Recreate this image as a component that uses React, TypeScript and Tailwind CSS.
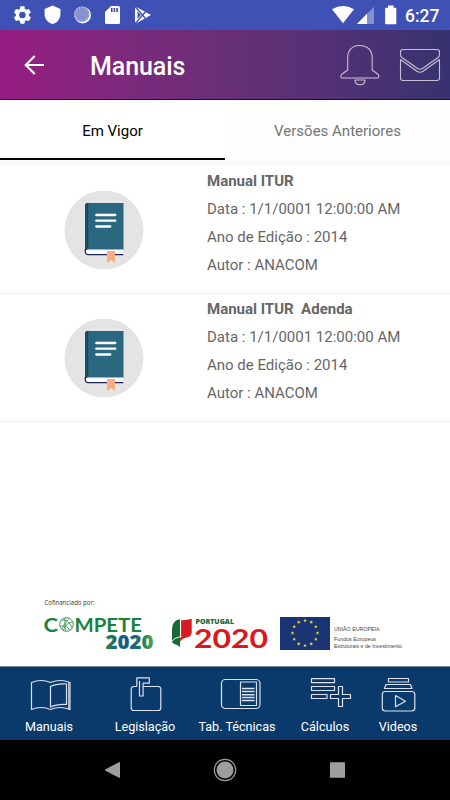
import type { ReactNode } from "react";

const manuals = [
  { title: "Manual ITUR", date: "1/1/0001 12:00:00 AM", year: "2014", author: "ANACOM" },
  { title: "Manual ITUR  Adenda", date: "1/1/0001 12:00:00 AM", year: "2014", author: "ANACOM" },
];

const StatusBar = () => (
  <div className="flex h-[30px] items-center justify-between bg-[#3f51b5] text-white">
    <svg width="160" height="30" viewBox="0 0 160 30" fill="#fff">
      <g transform="translate(11.6 4.2) scale(.9)">
        <path d="M19.14 12.94c.04-.3.06-.61.06-.94s-.02-.64-.07-.94l2.03-1.58a.49.49 0 0 0 .12-.61l-1.92-3.32a.49.49 0 0 0-.59-.22l-2.39.96a7 7 0 0 0-1.62-.94l-.36-2.54A.48.48 0 0 0 13.92 2.4h-3.84a.48.48 0 0 0-.47.41l-.36 2.54c-.59.24-1.13.57-1.62.94l-2.39-.96a.48.48 0 0 0-.59.22L2.74 8.87a.48.48 0 0 0 .12.61l2.03 1.58a6 6 0 0 0 0 1.88l-2.03 1.58a.49.49 0 0 0-.12.61l1.92 3.32c.12.22.37.29.59.22l2.39-.96c.5.38 1.03.7 1.62.94l.36 2.54c.05.24.24.41.48.41h3.84c.24 0 .44-.17.47-.41l.36-2.54a7 7 0 0 0 1.62-.94l2.39.96c.22.08.47 0 .59-.22l1.92-3.32a.48.48 0 0 0-.12-.61zM12 15.6a3.6 3.6 0 1 1 0-7.2 3.6 3.6 0 0 1 0 7.2" />
      </g>
      <path d="M52.5 5.600 60.400 9v5.200c0 4.700-3.400 8.600-7.900 9.900-4.500-1.300-7.900-5.200-7.900-9.900V9z" />
      <circle cx="82.700" cy="15.200" r="8.300" />
      <circle cx="81.800" cy="14.200" r="7.800" fill="#8792d1" />
      <circle cx="81.800" cy="14.200" r="7" fill="none" stroke="#c0c6e8" strokeWidth="1.500" strokeDasharray="1 1.700" />
      <path d="M111 6h7.500q1.500 0 1.500 1.500v15q0 1.500-1.500 1.500h-12q-1.500 0-1.500-1.500V12z" />
      <path d="M111.700 8v4M114.400 8v4M117.100 8v4" stroke="#3f51b5" strokeWidth="1.700" />
      <path d="M135 6.200 151 15 135 24z" />
      <path d="m135 6.500 10.500 12M135 23.700l10.500-12" stroke="#3f51b5" strokeWidth="1.300" />
      <path d="m137.500 11.500 3.400 3.600-3.400 3.600z" fill="#3f51b5" />
    </svg>
    <div className="flex items-center">
      <svg width="70" height="30" viewBox="330 0 70 30" fill="#fff">
        <path d="M332 9.300Q343 2.500 354 9.300L343 23.300z" />
        <path d="M374 6.800V24h-17z" fill="#8791d1" />
        <path d="M367 13.800V24h-10z" />
        <path d="M388 5.500h5.500v2.200h1.800q1 0 1 1v14.500q0 1-1 1h-9.200q-1 0-1-1V8.700q0-1 1-1h1.900z" />
      </svg>
      <span className="w-[50px] pl-[5px] pt-px text-[17.500px] font-medium leading-[30px]">6:27</span>
    </div>
  </div>
);

const Header = () => (
  <header className="flex h-[70px] items-center border-b border-[#1f0a4d] bg-linear-to-r from-[#961b81] to-[#37326f] text-white">
    <svg className="ml-6" width="21" height="20" viewBox="0 0 21 20" fill="none" stroke="#fff" strokeWidth="2.100">
      <path d="M20 10H1.800M10.700 1 1.700 10l9 9" />
    </svg>
    <h1 className="ml-[45px] mt-[3px] text-[25px] font-medium leading-none tracking-[-.1px]">Manuais</h1>
    <svg className="ml-auto mr-[9px] mt-[3px]" width="101" height="44" viewBox="340 44 101 44" fill="none" stroke="#c9bfd4" strokeWidth="1.100" strokeLinejoin="round">
      <path d="M347.700 57.500c0-7.500 5-12 11.700-12 7.600 0 12.800 4.500 12.800 12V70l6 4.500c1 1.500.6 3.500-.7 3.500h-35c-2 0-2-2-1-3.500l6.200-4.500z" />
      <path d="M355 80h10c0 3.200-2 4.700-5 4.700s-5-1.500-5-4.700z" />
      <path d="M403 49.500h34q2.500 0 2.500 2.500v2.500c0 1.500-.5 2.300-1.700 3.200l-15 10.600q-2.800 2-5.600 0L402.200 57.700c-1.200-.9-1.700-1.700-1.700-3.200V52q0-2.500 2.500-2.500z" />
      <path d="M400.500 59.500V78q0 2.500 2.500 2.500h34q2.500 0 2.500-2.500V59.500l-16.400 11.800q-3.100 2-6.200 0z" />
    </svg>
  </header>
);

const Tabs = () => (
  <div className="flex h-[66px] bg-[#fafafa] text-[15px]">
    <button className="h-[60px] w-1/2 border-b-2 border-black bg-white pt-1 text-black">Em Vigor</button>
    <button className="h-[60px] w-1/2 bg-[#fefefe] pt-0.5 text-[#757575]">Versões Anteriores</button>
  </div>
);

const BookIcon = () => (
  <svg width="80" height="80" viewBox="0 0 80 80">
    <circle cx="40" cy="40" r="39.500" fill="#e4e4e4" />
    <path d="M23.500 13H59.500v47H23.500q-2.500 0-2.500-3V15.500q0-2.500 2.500-2.500z" fill="#2b687f" />
    <path d="M23.500 13h.8v49h-1.300q-2-1-2-4V15.500q0-2.500 2.500-2.500z" fill="#194a60" />
    <path d="M24 59.500h35v4.500H24q-2.200 0-2.200-2.300t2.200-2.200z" fill="#fff" />
    <path d="M21.300 59v2.500q0 3.200 3 3.200h35" fill="none" stroke="#20215b" strokeWidth="1.200" />
    <path d="M32.300 25h19M32.300 30.700h19M32.300 36.500h14" stroke="#fff" strokeWidth="2.300" strokeLinecap="round" />
    <path d="M43 61h8v12l-4-3.300-4 3.300z" fill="#f8ac80" />
  </svg>
);

const ManualRow = ({ title, date, year, author }: (typeof manuals)[number]) => (
  <li className="flex h-32 items-start border-b border-[#ececec] pt-px">
    <div className="w-[207px] pl-[63.500px] pt-[23px]">
      <BookIcon />
    </div>
    <div className="whitespace-pre text-[15px] leading-7 text-[#666]">
      <p className="font-bold">{title}</p>
      <p>Data : {date}</p>
      <p>Ano de Edição : {year}</p>
      <p>Autor : {author}</p>
    </div>
  </li>
);

const stars = Array.from({ length: 12 }, (_, i) => {
  const angle = (i * Math.PI) / 6;
  return { x: 305 + 12.5 * Math.sin(angle), y: 633 - 12.5 * Math.cos(angle) };
});

const Sponsors = () => (
  <svg width="450" height="70" viewBox="0 596 450 70">
    <defs>
      <linearGradient id="compete">
        <stop offset="0" stopColor="#23834a" />
        <stop offset=".25" stopColor="#176878" />
        <stop offset=".5" stopColor="#155887" />
        <stop offset=".75" stopColor="#207c65" />
        <stop offset="1" stopColor="#5ba33e" />
      </linearGradient>
    </defs>
    <text x="44.500" y="604.500" fontSize="6.600" fill="#333" fontFamily="Open Sans, sans-serif" textLength="50" lengthAdjust="spacingAndGlyphs">Cofinanciado por:</text>
    <g fontFamily="Lato, sans-serif" fontWeight="700" fontSize="19.500" fill="#18833e">
      <text x="43.500" y="631.500" textLength="14.500" lengthAdjust="spacingAndGlyphs">C</text>
      <text x="74.500" y="631.500" textLength="67.500" lengthAdjust="spacingAndGlyphs">MPETE</text>
    </g>
    <g fill="none" stroke="#3b9652">
      <circle cx="66.500" cy="624.500" r="6.800" strokeWidth="1" />
      <path d="M61 620q8-1 11 8M60.500 626q7-1 9 4M65 618q1 6-3 11M69 618.500q-6 5-3 12.300M72.500 622q-6 0-9 8" strokeWidth=".9" />
    </g>
    <text x="105.500" y="649" fontFamily="Open Sans, sans-serif" fontWeight="800" fontSize="19.200" fill="url(#compete)" textLength="48" lengthAdjust="spacingAndGlyphs">2020</text>

    <path d="M180 619.200v28q-2-2.700-5-3-3-.5-3-4V629q0-8.500 8-9.800z" fill="#17693a" />
    <path d="M181 620.200q5.500.3 10.700-1.400V632q0 4.500-5 5.500-5.700 1-6.700 4.500 0-7 1-9z" fill="#d71920" />
    <path d="M180.600 618v19" stroke="#fff" strokeWidth=".9" />
    <path d="M172.500 641q1-3 9-4.500" stroke="#fff" strokeWidth="1" fill="none" />
    <text x="195.500" y="624" fontFamily="Open Sans, sans-serif" fontWeight="800" fontSize="7.400" fill="#17693a" textLength="38.500" lengthAdjust="spacingAndGlyphs">PORTUGAL</text>
    <text x="194" y="648" fontFamily="Lato, sans-serif" fontWeight="700" fontSize="27" fill="#d71920" textLength="74" lengthAdjust="spacingAndGlyphs">2020</text>

    <rect x="280" y="617" width="50" height="33" fill="#1b3474" />
    {stars.map(({ x, y }) => (
      <path
        key={`${x}-${y}`}
        transform={`translate(${x} ${y})`}
        d="M0-2 .5-.6 1.900-.6.8.3 1.200 1.600 0 .8-1.200 1.600-.8.3-1.900-.6-.5-.6z"
        fill="#f6e52c"
      />
    ))}
    <g fontFamily="Liberation Sans, sans-serif" fontSize="5.800" fill="#444">
      <text x="334" y="631" textLength="45.500" lengthAdjust="spacingAndGlyphs">UNIÃO EUROPEIA</text>
      <text x="334" y="641.200" textLength="42" lengthAdjust="spacingAndGlyphs">Fundos Europeus</text>
      <text x="334" y="647.800" textLength="68" lengthAdjust="spacingAndGlyphs">Estruturais e de Investimento</text>
    </g>
  </svg>
);

type NavItemProps = { label: string; className: string; viewBox: string; children: ReactNode };

const NavItem = ({ label, className, viewBox, children }: NavItemProps) => (
  <button className={`flex flex-col items-center pt-[9px] ${className}`}>
    <svg className="h-[38px] w-full" viewBox={viewBox} fill="none" stroke="#dbe1ec" strokeWidth="1.200" strokeLinejoin="round">
      {children}
    </svg>
    <span className="mt-px whitespace-nowrap text-[12.600px] leading-6 text-white">{label}</span>
  </button>
);

const BottomNav = () => (
  <nav className="flex h-[74px] border-t border-[#7d8897] bg-[#0a3a6b]">
    <NavItem label="Manuais" className="w-[98px]" viewBox="0 676 98 38">
      <path d="M31.500 682.500q9.500-4 19 0 10-4 19.500 0v27q-10-4-19.500 0-9.500-4-19 0z" />
      <path d="M50.500 686.500q6-3 16-2.500v20.500q-10-.5-16 2.500zM68.800 682v27.500" />
    </NavItem>
    <NavItem label="Legislação" className="w-[94px]" viewBox="98 676 94 38">
      <path d="M136.800 686.500H134q-2.800 0-2.800 2.800v18.400q0 2.800 2.800 2.800h24q2.800 0 2.800-2.800v-18.400q0-2.800-2.800-2.800h-14.800" />
      <path d="M136.800 686.500v-8.700h12.500v5.400h-6.200V696h-3.600v-15" />
    </NavItem>
    <NavItem label="Tab. Técnicas" className="w-[90px]" viewBox="192 676 90 38">
      <rect x="221.500" y="679.500" width="38.500" height="29" rx="4" />
      <rect x="240.500" y="682" width="16" height="23.500" />
      <path d="M242 688.500h12.500M242 691.500h12.500M242 694.700h12.500M242 697.500h12.500M242 700.500h12.500" strokeWidth="1.500" />
    </NavItem>
    <NavItem label="Cálculos" className="w-[86px]" viewBox="282 676 86 38">
      <path d="M311.500 678.700h23v4h-23zM311.500 686.500h23v4h-23zM311.500 694.500h15.500v4h-15.500zM338.500 686.500h4v8h8v4h-8v8h-4v-8h-8v-4h8z" />
    </NavItem>
    <NavItem label="Videos" className="w-[60px]" viewBox="368 676 60 38">
      <path d="M388.500 678.500h20v3.500h-20zM386 684.500h24.500l1.500 4h-27.500zM395.500 695.500l10 5.700-10 5.600z" />
      <rect x="382.300" y="691.500" width="32.500" height="19.500" rx="3" />
    </NavItem>
  </nav>
);

const SystemNav = () => (
  <div className="flex h-[60px] items-center justify-center bg-black">
    <svg width="240" height="24" viewBox="105 758 240 24" fill="#9e9e9e">
      <path d="M119 762.200q1-.5 1 .7v14.200q0 1.200-1 .7l-13.500-7.100q-1-.7 0-1.400z" />
      <circle cx="225" cy="770" r="8.500" />
      <circle cx="225" cy="770" r="10.700" fill="none" stroke="#9e9e9e" strokeWidth="1.200" />
      <rect x="330" y="762.200" width="15" height="15.600" rx=".5" />
    </svg>
  </div>
);

const App = () => (
  <div className="flex h-[800px] w-[450px] flex-col overflow-hidden bg-white font-[Roboto,sans-serif]">
    <StatusBar />
    <Header />
    <Tabs />
    <ul>
      {manuals.map((manual) => (
        <ManualRow key={manual.title} {...manual} />
      ))}
    </ul>
    <div className="mt-auto">
      <Sponsors />
      <BottomNav />
      <SystemNav />
    </div>
  </div>
);

export default App;
